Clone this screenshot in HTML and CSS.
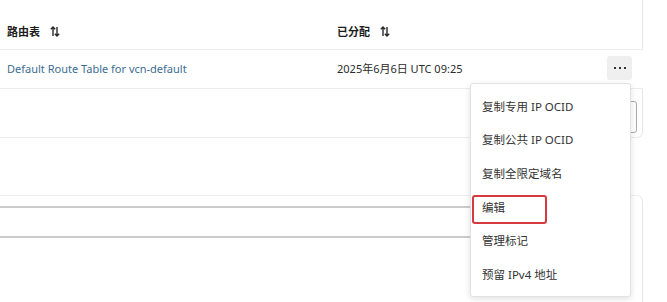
FILE: index.html
```html
<!DOCTYPE html>
<html>
<head>
	<title>路由表</title>
	<link rel="stylesheet" href="styles.css">
</head>
<body>
	<div class="table">
		<div class="thead">
			<div class="cell col-name">路由表 <span class="sort"><svg width="10" height="11" viewBox="0 0 10 11"><path d="M3 10V1M0.8 3.2L3 1l2.2 2.2M7 1v9M4.8 7.8L7 10l2.2-2.2" fill="none" stroke="#2a2a2a" stroke-width="1.4"/></svg></span></div>
			<div class="cell col-date">已分配 <span class="sort"><svg width="10" height="11" viewBox="0 0 10 11"><path d="M3 10V1M0.8 3.2L3 1l2.2 2.2M7 1v9M4.8 7.8L7 10l2.2-2.2" fill="none" stroke="#2a2a2a" stroke-width="1.4"/></svg></span></div>
		</div>
		<div class="row">
			<div class="cell col-name"><a class="link" href="#">Default Route Table for vcn-default</a></div>
			<div class="cell col-date">2025年6月6日 UTC 09:25</div>
			<button class="kebab"><span></span><span></span><span></span></button>
		</div>
		<div class="card">
			<div class="input-box"></div>
		</div>
		<div class="panel">
			<div class="field"></div>
		</div>
	</div>

	<div class="menu">
		<div class="menu-item">复制专用 IP OCID</div>
		<div class="menu-item">复制公共 IP OCID</div>
		<div class="menu-item">复制全限定域名</div>
		<div class="menu-item">编辑</div>
		<div class="menu-item">管理标记</div>
		<div class="menu-item">预留 IPv4 地址</div>
		<div class="highlight"></div>
	</div>
</body>
</html>
```

FILE: styles.css
```css
* {
	box-sizing: border-box;
}

body {
	margin: 0;
	background: #fff;
	font-family: "Noto Sans", "Noto Sans CJK SC", sans-serif;
	font-size: 11px;
	color: #2b2b2b;
	position: relative;
	height: 302px;
	overflow: hidden;
}

.table {
	width: 643px;
}

.thead {
	height: 50px;
	display: flex;
	align-items: center;
	padding-top: 13px;
	border-bottom: 1px solid #ececec;
	border-right: 1px solid #e6e6e6;
	font-weight: bold;
	color: #1c1c1c;
}

.cell {
	display: flex;
	align-items: center;
}

.col-name {
	width: 337px;
	padding-left: 7px;
}

.col-date {
	flex: 1;
}

.sort {
	margin-left: 10px;
	display: flex;
}

.row {
	height: 39px;
	display: flex;
	align-items: center;
	border-bottom: 1px solid #ececec;
	padding-bottom: 2px;
}

.link {
	color: #3b6d93;
	text-decoration: none;
}

.kebab {
	width: 25px;
	height: 24px;
	margin-right: 11px;
	border: none;
	border-radius: 3px;
	background: #efefef;
	display: flex;
	align-items: center;
	justify-content: center;
	gap: 3px;
	padding: 0;
}

.kebab span {
	width: 2px;
	height: 2px;
	background: #333;
}

.card {
	height: 49px;
	border-bottom: 1px solid #ececec;
	border-right: 1px solid #e6e6e6;
	border-bottom-right-radius: 6px;
	display: flex;
	justify-content: flex-end;
	padding-top: 12px;
	padding-right: 5px;
}

.input-box {
	width: 150px;
	height: 32px;
	border: 1px solid #aaa;
	border-radius: 3px;
}

.panel {
	margin-top: 57px;
	height: 120px;
	border-top: 1px solid #eeeeee;
	border-right: 1px solid #e6e6e6;
	border-top-right-radius: 6px;
	padding-top: 10px;
}

.field {
	width: 600px;
	height: 32px;
	border-top: 2px solid #cbcbcb;
	border-bottom: 2px solid #cbcbcb;
}

.menu {
	position: absolute;
	left: 470px;
	top: 83px;
	width: 161px;
	height: 214px;
	background: #fff;
	border: 1px solid #e2e2e2;
	border-radius: 3px;
	box-shadow: 0 2px 6px rgba(0, 0, 0, 0.12);
	padding-top: 5px;
	font-size: 11.5px;
	color: #333;
}

.menu-item {
	height: 33.6px;
	display: flex;
	align-items: center;
	padding-left: 11px;
}

.highlight {
	position: absolute;
	left: 1px;
	top: 111px;
	width: 75px;
	height: 29px;
	border: 2px solid #d63a3f;
	border-radius: 3px;
}
```
